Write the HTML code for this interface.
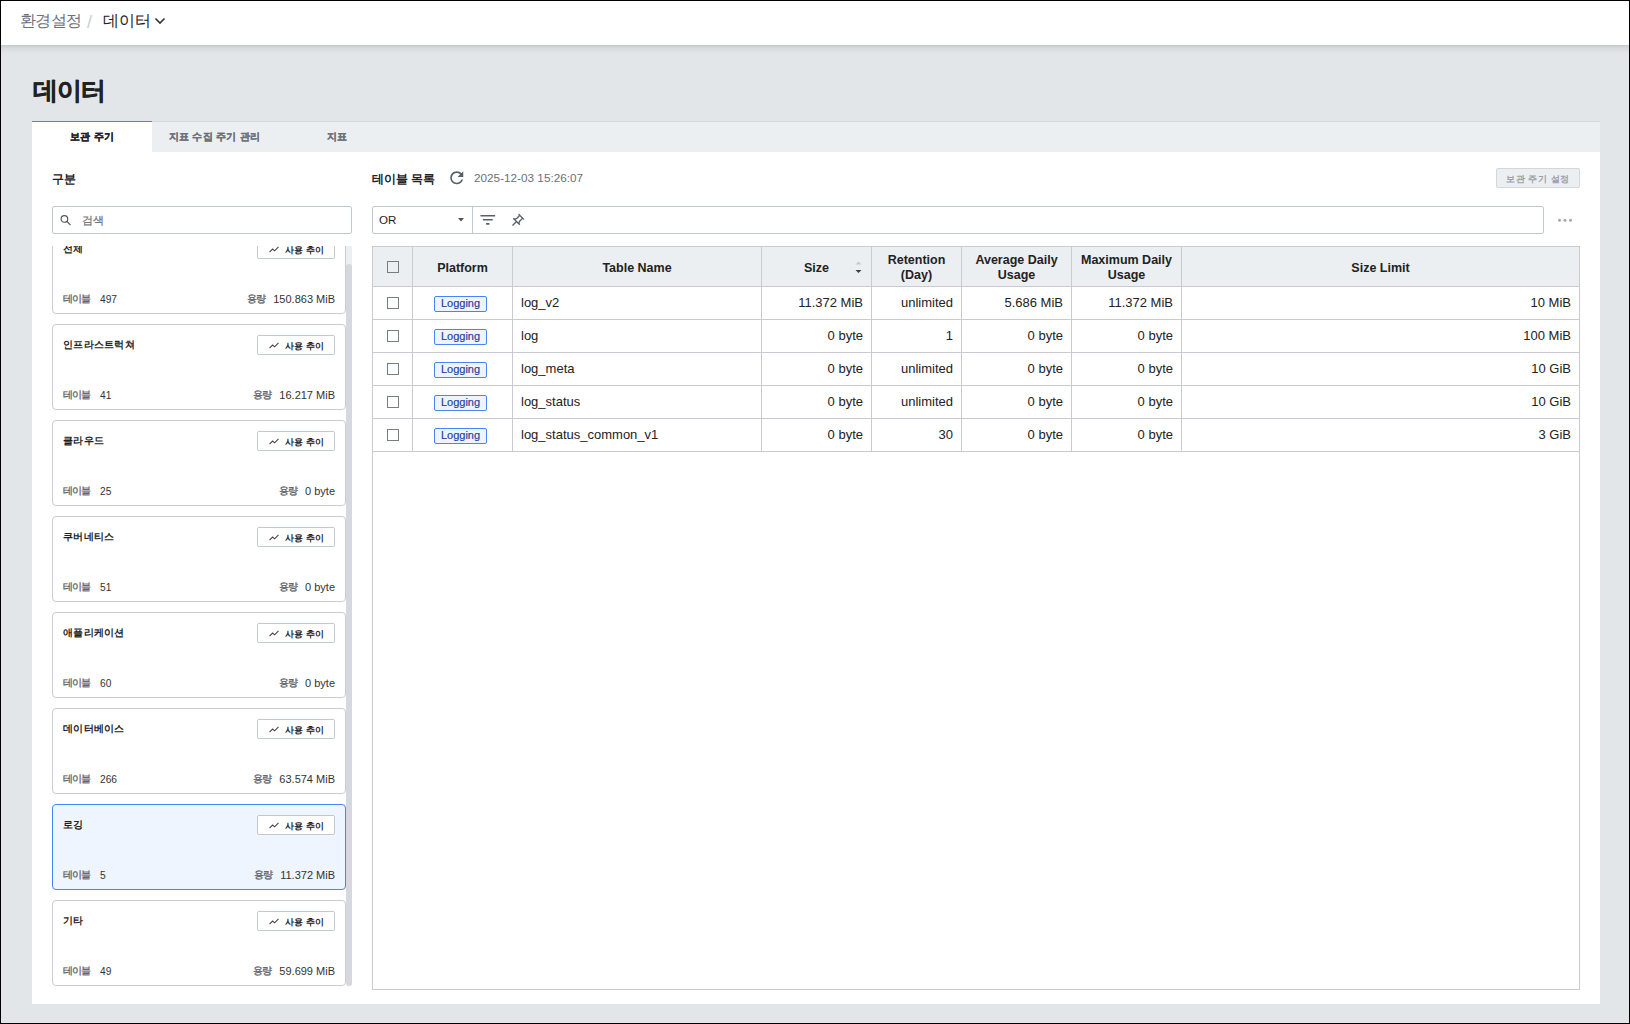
<!DOCTYPE html>
<html><head><meta charset="utf-8">
<style>
*{box-sizing:border-box;margin:0;padding:0}
html,body{width:1630px;height:1024px;overflow:hidden}
body{font-family:"Liberation Sans",sans-serif;background:#e3e6e9;position:relative;color:#222}
.abs{position:absolute}
#frame{position:absolute;left:0;top:0;width:1630px;height:1024px;border:1px solid #000;z-index:50;pointer-events:none}
#frame2{position:absolute;left:1px;top:1px;width:1628px;height:1022px;border:1px solid #f4f6f8;border-top:none;z-index:49}
#hdr{position:absolute;left:0;top:0;width:1630px;height:45px;background:#fff}
#hsh{position:absolute;left:0;top:45px;width:1630px;height:9px}
#hsh div{height:1px}
.crumb{position:absolute;top:10px;font-size:16px;line-height:22px;white-space:nowrap}
#title{position:absolute;left:33px;top:72px;font-size:25px;letter-spacing:-1px;-webkit-text-stroke:0.4px #222;font-weight:bold;line-height:36px;color:#222}
#tabs{position:absolute;left:32px;top:121px;width:1568px;height:31px;background:#eceff2;border-top:1px solid #d5d9dd}
.tab{position:absolute;top:-1px;height:32px;font-size:10.4px;letter-spacing:0.3px;font-weight:bold;-webkit-text-stroke:0.2px currentColor;text-align:center;line-height:31px;color:#6d727a}
.tab.on{background:#fff;border-top:1px solid #4884f4;color:#222;line-height:29px}
#panel{position:absolute;left:32px;top:152px;width:1568px;height:852px;background:#fff}
.card{position:absolute;left:0;width:294px;height:86px;border:1px solid #c9cdd3;border-radius:4px;background:#fff}
.card.sel{background:#eef5ff;border-color:#4884f4}
.cn{position:absolute;left:10px;top:13px;font-size:9.8px;letter-spacing:0.3px;font-weight:bold;line-height:14px;color:#222}
.cb{position:absolute;left:204px;top:10px;width:78px;height:20px;border:1px solid #c3c8ce;border-radius:2px;background:#fff;font-size:9.2px;line-height:20px;color:#222;font-weight:bold}
.cb svg{position:absolute;left:11px;top:6px}
.cb span{position:absolute;left:27px;top:0}
.ct{position:absolute;left:10px;top:63px;font-size:10px;letter-spacing:-0.8px;line-height:14px;color:#5d626a;-webkit-text-stroke:0.3px #5d626a}
.ctv{position:absolute;left:47px;top:64px;font-size:10.2px;line-height:14px;color:#333}
.cv{position:absolute;right:10px;top:62px;line-height:14px;white-space:nowrap}
.cv span{font-size:10px;letter-spacing:-0.8px;color:#5d626a;position:relative;top:-1px;-webkit-text-stroke:0.3px #5d626a}
.cv b{font-weight:normal;color:#333;font-size:11px;margin-left:8px}
.thead{position:absolute;left:0;top:0;width:1206px;height:39px;background:#eceff2}
.th{position:absolute;top:0;height:39px}
.tht{position:absolute;left:0;right:0;top:20.5px;transform:translateY(-50%);text-align:center;font-size:12.5px;font-weight:bold;line-height:15px;color:#222}
.vl{position:absolute;top:0;width:1px;height:204px;background:#c8ccd1}
.hl{position:absolute;left:0;width:1206px;height:1px;background:#c8ccd1}
.tr{position:absolute;left:0;width:1206px;height:32px}
.chk{position:absolute;left:14px;width:12px;height:12px;border:1.5px solid #787d85;background:transparent;border-radius:0}
.badge{position:absolute;left:61px;top:9px;width:53px;height:16px;border:1px solid #4884f4;border-radius:2px;background:#eef4fd;color:#1f3a9e;font-size:11px;line-height:12px;text-align:center;-webkit-text-stroke:0.15px #1f3a9e}
.td{position:absolute;top:9px;font-size:13px;line-height:14px;color:#222;white-space:nowrap}
</style></head>
<body>
<div id="frame"></div>
<div id="hsh"><div style="background:rgb(200, 204, 209)"></div><div style="background:rgb(206, 210, 214)"></div><div style="background:rgb(211, 215, 218)"></div><div style="background:rgb(215, 219, 222)"></div><div style="background:rgb(218, 222, 225)"></div><div style="background:rgb(221, 224, 227)"></div><div style="background:rgb(223, 226, 229)"></div><div style="background:rgb(225, 228, 231)"></div><div style="background:rgb(226, 229, 232)"></div></div>
<div id="hdr">
  <div class="crumb" style="left:19.5px;color:#6b7079;font-size:16px;letter-spacing:-0.5px">환경설정</div>
  <div class="crumb" style="left:87px;top:11px;color:#c9cdd2;font-size:18px">/</div>
  <div class="crumb" style="left:103px;color:#222">데이터</div>
  <svg class="abs" style="left:154px;top:16px" width="12" height="10" viewBox="0 0 12 10"><path d="M1.5 2.5 L6 7 L10.5 2.5" fill="none" stroke="#333" stroke-width="1.6"/></svg>
</div>
<div id="title">데이터</div>
<div id="tabs">
  <div class="tab on" style="left:0;width:120px">보관 주기</div>
  <div class="tab" style="left:120px;width:125px">지표 수집 주기 관리</div>
  <div class="tab" style="left:245px;width:120px">지표</div>
</div>
<div id="panel"></div>
<!-- LEFT -->
<div class="abs" style="left:52px;top:171px;font-size:11.5px;font-weight:bold;line-height:16px;color:#222">구분</div>
<div class="abs" style="left:52px;top:206px;width:300px;height:28px;border:1px solid #c3c8ce;border-radius:2px;background:#fff">
  <svg class="abs" style="left:7px;top:8px" width="12" height="12" viewBox="0 0 12 12"><circle cx="4.4" cy="3.9" r="3.3" fill="none" stroke="#50555c" stroke-width="1.15"/><path d="M6.8 6.3 L10.6 10.1" stroke="#50555c" stroke-width="1.2"/></svg>
  <div class="abs" style="left:29px;top:6px;font-size:11px;line-height:14px;color:#6a6f77;-webkit-text-stroke:0.2px #6a6f77">검색</div>
</div>
<div id="list" class="abs" style="left:52px;top:246px;width:300px;height:740px;overflow:hidden">
  <div class="card" style="top:-18px">
    <div class="cn">전체</div>
    <div class="cb"><svg width="10" height="7" viewBox="0 0 10 7"><path d="M0.5 6.2 L3.6 3 L5.6 4.8 L9.5 0.8" fill="none" stroke="#444" stroke-width="1.1"/></svg><span>사용 추이</span></div>
    <div class="ct">테이블</div><div class="ctv">497</div>
    <div class="cv"><span>용량</span><b>150.863 MiB</b></div>
  </div>
  <div class="card" style="top:78px">
    <div class="cn">인프라스트럭쳐</div>
    <div class="cb"><svg width="10" height="7" viewBox="0 0 10 7"><path d="M0.5 6.2 L3.6 3 L5.6 4.8 L9.5 0.8" fill="none" stroke="#444" stroke-width="1.1"/></svg><span>사용 추이</span></div>
    <div class="ct">테이블</div><div class="ctv">41</div>
    <div class="cv"><span>용량</span><b>16.217 MiB</b></div>
  </div>
  <div class="card" style="top:174px">
    <div class="cn">클라우드</div>
    <div class="cb"><svg width="10" height="7" viewBox="0 0 10 7"><path d="M0.5 6.2 L3.6 3 L5.6 4.8 L9.5 0.8" fill="none" stroke="#444" stroke-width="1.1"/></svg><span>사용 추이</span></div>
    <div class="ct">테이블</div><div class="ctv">25</div>
    <div class="cv"><span>용량</span><b>0 byte</b></div>
  </div>
  <div class="card" style="top:270px">
    <div class="cn">쿠버네티스</div>
    <div class="cb"><svg width="10" height="7" viewBox="0 0 10 7"><path d="M0.5 6.2 L3.6 3 L5.6 4.8 L9.5 0.8" fill="none" stroke="#444" stroke-width="1.1"/></svg><span>사용 추이</span></div>
    <div class="ct">테이블</div><div class="ctv">51</div>
    <div class="cv"><span>용량</span><b>0 byte</b></div>
  </div>
  <div class="card" style="top:366px">
    <div class="cn">애플리케이션</div>
    <div class="cb"><svg width="10" height="7" viewBox="0 0 10 7"><path d="M0.5 6.2 L3.6 3 L5.6 4.8 L9.5 0.8" fill="none" stroke="#444" stroke-width="1.1"/></svg><span>사용 추이</span></div>
    <div class="ct">테이블</div><div class="ctv">60</div>
    <div class="cv"><span>용량</span><b>0 byte</b></div>
  </div>
  <div class="card" style="top:462px">
    <div class="cn">데이터베이스</div>
    <div class="cb"><svg width="10" height="7" viewBox="0 0 10 7"><path d="M0.5 6.2 L3.6 3 L5.6 4.8 L9.5 0.8" fill="none" stroke="#444" stroke-width="1.1"/></svg><span>사용 추이</span></div>
    <div class="ct">테이블</div><div class="ctv">266</div>
    <div class="cv"><span>용량</span><b>63.574 MiB</b></div>
  </div>
  <div class="card sel" style="top:558px">
    <div class="cn">로깅</div>
    <div class="cb"><svg width="10" height="7" viewBox="0 0 10 7"><path d="M0.5 6.2 L3.6 3 L5.6 4.8 L9.5 0.8" fill="none" stroke="#444" stroke-width="1.1"/></svg><span>사용 추이</span></div>
    <div class="ct">테이블</div><div class="ctv">5</div>
    <div class="cv"><span>용량</span><b>11.372 MiB</b></div>
  </div>
  <div class="card" style="top:654px">
    <div class="cn">기타</div>
    <div class="cb"><svg width="10" height="7" viewBox="0 0 10 7"><path d="M0.5 6.2 L3.6 3 L5.6 4.8 L9.5 0.8" fill="none" stroke="#444" stroke-width="1.1"/></svg><span>사용 추이</span></div>
    <div class="ct">테이블</div><div class="ctv">49</div>
    <div class="cv"><span>용량</span><b>59.699 MiB</b></div>
  </div>

  <div class="abs" style="left:294px;top:0;width:6px;height:740px;background:#eceff2;border-radius:0 0 3px 3px"></div>
  <div class="abs" style="left:294px;top:18px;width:6px;height:722px;background:#d5d8dc;border-radius:3px"></div>
</div>

<!-- RIGHT -->
<div class="abs" style="left:372px;top:171px;font-size:11.5px;font-weight:bold;line-height:16px;color:#222;white-space:nowrap">테이블 목록</div>
<svg class="abs" style="left:447.2px;top:168.2px" width="19.5" height="19.5" viewBox="0 0 24 24"><path fill="#5a5f66" d="M17.65 6.35C16.2 4.9 14.21 4 12 4c-4.42 0-7.99 3.58-7.99 8s3.57 8 7.99 8c3.73 0 6.84-2.55 7.73-6h-2.08c-.82 2.33-3.04 4-5.65 4-3.31 0-6-2.69-6-6s2.69-6 6-6c1.66 0 3.14.69 4.22 1.78L13 11h7V4l-2.35 2.35z"/></svg>
<div class="abs" style="left:474px;top:171px;font-size:11.75px;line-height:14px;color:#6b7079;white-space:nowrap">2025-12-03 15:26:07</div>
<div class="abs" style="left:1496px;top:168px;width:84px;height:20px;background:#eceff2;border:1px solid #d3d7dc;border-radius:2px;font-size:9.4px;letter-spacing:0.5px;line-height:19px;color:#9ba0a8;text-align:center;white-space:nowrap;font-weight:bold">보관 주기 설정</div>
<div class="abs" style="left:372px;top:206px;width:1172px;height:28px;border:1px solid #c3c8ce;border-radius:2px;background:#fff">
  <div class="abs" style="left:6px;top:6px;font-size:11.6px;line-height:14px;color:#222">OR</div>
  <svg class="abs" style="left:85px;top:11px" width="6" height="4" viewBox="0 0 6 4"><path d="M0 0 L6 0 L3 3.5 Z" fill="#555"/></svg>
  <div class="abs" style="left:99px;top:0;width:1px;height:26px;background:#c3c8ce"></div>
  <svg class="abs" style="left:105.2px;top:3.2px" width="19.6" height="19.6" viewBox="0 0 24 24"><path fill="#5a5f66" d="M10 18h4v-2h-4v2zM3 6v2h18V6H3zm3 7h12v-2H6v2z"/></svg>
  <svg class="abs" style="left:136px;top:6px" width="16" height="16" viewBox="0 0 24 24"><g transform="rotate(45 12 12)"><path fill="#5a5f66" d="M16,9V4l1,0c0.55,0,1-0.45,1-1v0c0-0.55-0.45-1-1-1H7C6.45,2,6,2.45,6,3v0 c0,0.55,0.45,1,1,1l1,0v5c0,1.66-1.34,3-3,3h0v2h5.97v7l1,1l1-1v-7H19v-2h0C17.34,12,16,10.66,16,9z M8.8,12c0.8-0.94,1.2-1.95,1.2-3V4h4v5c0,1.05,0.4,2.06,1.2,3H8.8z"/></g></svg>
</div>
<svg class="abs" style="left:1557px;top:218px" width="16" height="5" viewBox="0 0 16 5"><circle cx="2.5" cy="2.2" r="1.5" fill="#a3a8b0"/><circle cx="8" cy="2.2" r="1.5" fill="#a3a8b0"/><circle cx="13.5" cy="2.2" r="1.5" fill="#a3a8b0"/></svg>
<div id="tbl" class="abs" style="left:372px;top:246px;width:1208px;height:744px;border:1px solid #c8ccd1;background:#fff">
<div class="thead"></div>
<div class="th" style="left:0px;width:39px"><span class="chk" style="top:14px"></span></div>
<div class="vl" style="left:39px"></div>
<div class="th" style="left:40px;width:99px"><div class="tht">Platform</div></div>
<div class="vl" style="left:139px"></div>
<div class="th" style="left:140px;width:248px"><div class="tht">Table Name</div></div>
<div class="vl" style="left:388px"></div>
<div class="th" style="left:389px;width:109px"><div class="tht">Size</div><svg class="abs" style="right:8.7px;top:14px" width="7" height="13" viewBox="0 0 7 13"><path d="M0.5 3.5 L3.5 0.5 L6.5 3.5 Z" fill="#c4c8cd"/><path d="M0.5 9 L3.5 12 L6.5 9 Z" fill="#3c3f44"/></svg></div>
<div class="vl" style="left:498px"></div>
<div class="th" style="left:499px;width:89px"><div class="tht">Retention<br>(Day)</div></div>
<div class="vl" style="left:588px"></div>
<div class="th" style="left:589px;width:109px"><div class="tht">Average Daily<br>Usage</div></div>
<div class="vl" style="left:698px"></div>
<div class="th" style="left:699px;width:109px"><div class="tht">Maximum Daily<br>Usage</div></div>
<div class="vl" style="left:808px"></div>
<div class="th" style="left:809px;width:397px"><div class="tht">Size Limit</div></div>
<div class="hl" style="top:39px"></div>
<div class="tr" style="top:40px"><span class="chk" style="left:14px;top:10px"></span><div class="badge">Logging</div><div class="td l" style="left:148px">log_v2</div><div class="td r" style="right:716px">11.372 MiB</div><div class="td r" style="right:626px">unlimited</div><div class="td r" style="right:516px">5.686 MiB</div><div class="td r" style="right:406px">11.372 MiB</div><div class="td r" style="right:8px">10 MiB</div></div>
<div class="hl" style="top:72px"></div>
<div class="tr" style="top:73px"><span class="chk" style="left:14px;top:10px"></span><div class="badge">Logging</div><div class="td l" style="left:148px">log</div><div class="td r" style="right:716px">0 byte</div><div class="td r" style="right:626px">1</div><div class="td r" style="right:516px">0 byte</div><div class="td r" style="right:406px">0 byte</div><div class="td r" style="right:8px">100 MiB</div></div>
<div class="hl" style="top:105px"></div>
<div class="tr" style="top:106px"><span class="chk" style="left:14px;top:10px"></span><div class="badge">Logging</div><div class="td l" style="left:148px">log_meta</div><div class="td r" style="right:716px">0 byte</div><div class="td r" style="right:626px">unlimited</div><div class="td r" style="right:516px">0 byte</div><div class="td r" style="right:406px">0 byte</div><div class="td r" style="right:8px">10 GiB</div></div>
<div class="hl" style="top:138px"></div>
<div class="tr" style="top:139px"><span class="chk" style="left:14px;top:10px"></span><div class="badge">Logging</div><div class="td l" style="left:148px">log_status</div><div class="td r" style="right:716px">0 byte</div><div class="td r" style="right:626px">unlimited</div><div class="td r" style="right:516px">0 byte</div><div class="td r" style="right:406px">0 byte</div><div class="td r" style="right:8px">10 GiB</div></div>
<div class="hl" style="top:171px"></div>
<div class="tr" style="top:172px"><span class="chk" style="left:14px;top:10px"></span><div class="badge">Logging</div><div class="td l" style="left:148px">log_status_common_v1</div><div class="td r" style="right:716px">0 byte</div><div class="td r" style="right:626px">30</div><div class="td r" style="right:516px">0 byte</div><div class="td r" style="right:406px">0 byte</div><div class="td r" style="right:8px">3 GiB</div></div>
<div class="hl" style="top:204px"></div>

</div>
</body></html>
